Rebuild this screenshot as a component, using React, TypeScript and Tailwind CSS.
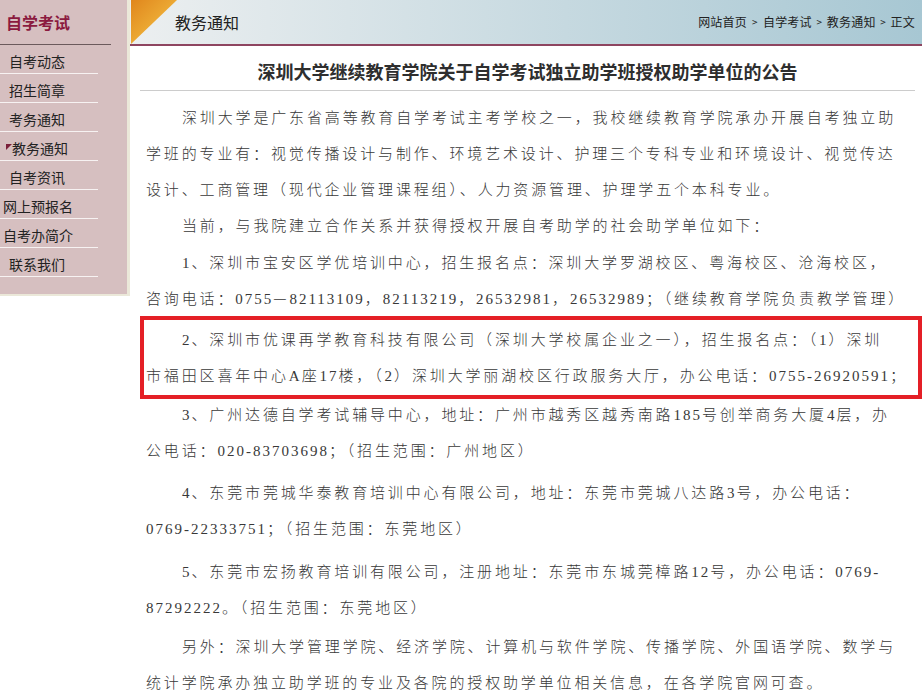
import React from "react";

function T({ s }: { s: string }) {
  const parts = s.split(/([\x21-\x7E]+)/);
  return (
    <>
      {parts.map((p, i) =>
        /^[\x21-\x7E]+$/.test(p) ? (
          <span key={i} className="font-['Liberation_Serif',serif] tracking-[2px]">
            {p}
          </span>
        ) : (
          <React.Fragment key={i}>{p}</React.Fragment>
        )
      )}
    </>
  );
}

function L({ s, indent }: { s: string; indent?: boolean }) {
  return (
    <div className={indent ? "h-[36px] whitespace-nowrap pl-[36px]" : "h-[36px] whitespace-nowrap"}>
      <T s={s} />
    </div>
  );
}

const menu: { label: string; cls: string; marker?: boolean }[] = [
  { label: "自考动态", cls: "pl-[9px]" },
  { label: "招生简章", cls: "pl-[9px]" },
  { label: "考务通知", cls: "pl-[9px]" },
  { label: "教务通知", cls: "pl-[6px]", marker: true },
  { label: "自考资讯", cls: "pl-[9px]" },
  { label: "网上预报名", cls: "pl-[3px]" },
  { label: "自考办简介", cls: "pl-[3px]" },
  { label: "联系我们", cls: "pl-[9px]" },
];

export default function App() {
  return (
    <div className="flex w-[922px] h-[693px] overflow-hidden bg-white font-['Noto_Sans_CJK_SC',sans-serif]">
      {/* Sidebar */}
      <div className="w-[130px] h-[296px] shrink-0 self-start bg-[#d6bfc0] border-r-[3px] border-b-[2px] border-[#ebe8d9]">
        <div className="h-[44px] flex items-center pl-[6px] text-[16px] font-bold text-[#8b1a3f] leading-none">
          自学考试
        </div>
        <div className="w-[111px] h-[1px] bg-[#6b5a5c]" />
        {menu.map((m) => (
          <div
            key={m.label}
            className={`w-[98px] h-[29px] border-b border-[#f7f2f2] pt-[6px] leading-[20px] text-[14px] text-[#222] flex items-start ${m.cls}`}
          >
            {m.marker && (
              <span className="mt-[6px] w-0 h-0 border-t-[6px] border-r-[6px] border-t-[#7b1f3a] border-r-transparent" />
            )}
            {m.label}
          </div>
        ))}
      </div>

      {/* Main */}
      <div className="flex-1 min-w-0">
        <div className="relative h-[46px] border-b-2 border-[#8e4560] bg-[linear-gradient(to_right,#eceff0,#a7c7d3)] flex items-center justify-between">
          <svg className="absolute left-[1px] top-0" width="46" height="44" viewBox="0 0 46 44">
            <defs>
              <linearGradient id="og" x1="0" y1="0" x2="1" y2="1">
                <stop offset="0" stopColor="#e0861c" />
                <stop offset="1" stopColor="#f7ca4a" />
              </linearGradient>
            </defs>
            <polygon points="0,0 46,0 0,44" fill="url(#og)" />
          </svg>
          <div className="relative pl-[45px] text-[16px] text-[#222] leading-none">教务通知</div>
          <div className="flex items-center pr-[7px] text-[12px] tracking-[0.2px] text-[#222] leading-none">
            <span>网站首页</span>
            <span className="w-[16px] text-center text-[10px]">&gt;</span>
            <span>自学考试</span>
            <span className="w-[15px] text-center text-[10px]">&gt;</span>
            <span>教务通知</span>
            <span className="w-[15px] text-center text-[10px]">&gt;</span>
            <span>正文</span>
          </div>
        </div>

        <div className="pl-[10px] pr-[7px]">
          <div className="mt-[13px] leading-[24px] text-[18px] font-bold text-[#2e2e2e] text-center whitespace-nowrap">
            深圳大学继续教育学院关于自学考试独立助学班授权助学单位的公告
          </div>
          <div className="mt-[7px] h-0 border-t border-[#cccccc]" />
        </div>

        <div className="pl-[16px] pr-[7px] mt-[8px] text-[15px] leading-[36px] tracking-[2.85px] text-[#383838] font-light">
          <div>
            <L indent s="深圳大学是广东省高等教育自学考试主考学校之一，我校继续教育学院承办开展自考独立助" />
            <L s="学班的专业有：视觉传播设计与制作、环境艺术设计、护理三个专科专业和环境设计、视觉传达" />
            <L s="设计、工商管理（现代企业管理课程组）、人力资源管理、护理学五个本科专业。" />
          </div>
          <div>
            <L indent s="当前，与我院建立合作关系并获得授权开展自考助学的社会助学单位如下：" />
          </div>
          <div className="mt-[1px]">
            <L indent s="1、深圳市宝安区学优培训中心，招生报名点：深圳大学罗湖校区、粤海校区、沧海校区，" />
            <L s="咨询电话：0755—82113109，82113219，26532981，26532989；（继续教育学院负责教学管理）" />
          </div>
          <div className="relative mt-[5px]">
            <L indent s="2、深圳市优课再学教育科技有限公司（深圳大学校属企业之一），招生报名点：（1）深圳" />
            <L s="市福田区喜年中心A座17楼，（2）深圳大学丽湖校区行政服务大厅，办公电话：0755-26920591；" />
            <div className="absolute -top-[5px] -bottom-[6px] -left-[6px] -right-[7px] border-4 border-[#e41f26] pointer-events-none" />
          </div>
          <div className="mt-[3px]">
            <L indent s="3、广州达德自学考试辅导中心，地址：广州市越秀区越秀南路185号创举商务大厦4层，办" />
            <L s="公电话：020-83703698；（招生范围：广州地区）" />
          </div>
          <div className="mt-[6px]">
            <L indent s="4、东莞市莞城华泰教育培训中心有限公司，地址：东莞市莞城八达路3号，办公电话：" />
            <L s="0769-22333751；（招生范围：东莞地区）" />
          </div>
          <div className="mt-[7px]">
            <L indent s="5、东莞市宏扬教育培训有限公司，注册地址：东莞市东城莞樟路12号，办公电话：0769-" />
            <L s="87292222。（招生范围：东莞地区）" />
          </div>
          <div className="mt-[3px]">
            <L indent s="另外：深圳大学管理学院、经济学院、计算机与软件学院、传播学院、外国语学院、数学与" />
            <L s="统计学院承办独立助学班的专业及各院的授权助学单位相关信息，在各学院官网可查。" />
          </div>
        </div>
      </div>
    </div>
  );
}
